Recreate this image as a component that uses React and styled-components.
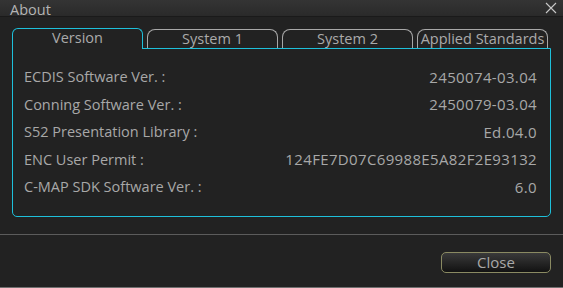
import * as React from 'react';
import styled, { createGlobalStyle } from 'styled-components';

const GlobalStyle = createGlobalStyle`
  html, body {
    margin: 0;
    padding: 0;
    background: #222222;
  }
  body {
    font-family: "Open Sans", "Noto Sans", sans-serif;
  }
`;

const rows = [
  ['ECDIS Software Ver. :', '2450074-03.04'],
  ['Conning Software Ver. :', '2450079-03.04'],
  ['S52 Presentation Library :', 'Ed.04.0'],
  ['ENC User Permit :', '124FE7D07C69988E5A82F2E93132'],
  ['C-MAP SDK Software Ver. :', '6.0'],
];

const tabs = ['Version', 'System 1', 'System 2', 'Applied Standards'];

const App = () => {
  return (
    <>
      <GlobalStyle />
      <Dialog>
        <TitleBar>
          <Title>About</Title>
          <CloseIcon width="12" height="12" viewBox="0 0 12 12">
            <path d="M1 1 L11 11 M11 1 L1 11" stroke="#c8c8c8" strokeWidth="1.1" />
          </CloseIcon>
        </TitleBar>
        <Body>
          <TabBar>
            {tabs.map((t, i) => (
              <Tab key={t} $active={i === 0}>{t}</Tab>
            ))}
          </TabBar>
          <Panel>
            {rows.map(([label, value]) => (
              <Row key={label}>
                <Label>{label}</Label>
                <Value>{value}</Value>
              </Row>
            ))}
          </Panel>
        </Body>
        <Separator />
        <Footer>
          <Button>Close</Button>
        </Footer>
      </Dialog>
    </>
  );
};

const Dialog = styled.div`
  width: 563px;
  height: 288px;
  box-sizing: border-box;
  background: #222222;
  border-bottom: 1px solid #707070;
  display: flex;
  flex-direction: column;
  overflow: hidden;
`;

const TitleBar = styled.div`
  height: 17px;
  box-sizing: border-box;
  flex-shrink: 0;
  display: flex;
  align-items: flex-start;
  justify-content: space-between;
  padding: 3px 6px 0 10px;
  background: linear-gradient(to bottom, #343434, #2a2a2a);
  border-bottom: 1px solid #1a1a1a;
`;

const Title = styled.div`
  font-size: 14.5px;
  color: #b4b4b4;
  line-height: 14px;
`;

const CloseIcon = styled.svg`
  display: block;
  margin-top: -1px;
`;

const Body = styled.div`
  padding: 11px 12px 0 12px;
  display: flex;
  flex-direction: column;
`;

const TabBar = styled.div`
  display: flex;
  gap: 4px;
  align-items: flex-end;
`;

const Tab = styled.div`
  width: 131px;
  box-sizing: border-box;
  height: ${p => (p.$active ? '21px' : '19px')};
  margin-bottom: ${p => (p.$active ? '-1px' : '0')};
  position: relative;
  z-index: ${p => (p.$active ? 1 : 0)};
  background: #222222;
  border: 1px solid ${p => (p.$active ? '#1ec0da' : '#a8a8a8')};
  border-bottom: none;
  border-radius: ${p => (p.$active ? '6px 6px 0 0' : '8px 8px 0 0')};
  color: #aaaaaa;
  font-size: 14.5px;
  line-height: 18px;
  text-align: center;
  white-space: nowrap;
`;

const Panel = styled.div`
  height: 169px;
  box-sizing: border-box;
  border: 1px solid #1ec0da;
  border-radius: 0 0 5px 5px;
  padding: 14px 13px 0 11px;
  display: flex;
  flex-direction: column;
`;

const Row = styled.div`
  height: 27.5px;
  display: flex;
  justify-content: space-between;
  align-items: center;
  color: #a8a8a8;
`;

const Label = styled.span`
  font-size: 14.5px;
`;

const Value = styled.span`
  font-size: 15px;
  letter-spacing: 0.35px;
`;

const Separator = styled.div`
  margin-top: 17px;
  height: 1px;
  background: #5c5c5c;
`;

const Footer = styled.div`
  display: flex;
  justify-content: flex-end;
  padding: 17px 12px 0 0;
`;

const Button = styled.div`
  width: 110px;
  height: 21px;
  box-sizing: border-box;
  border: 1px solid #8a8a62;
  border-radius: 5px;
  background: linear-gradient(to bottom, #3a3a3a, #121212);
  color: #a8a8a8;
  font-size: 15px;
  line-height: 18px;
  text-align: center;
`;

export default App;
